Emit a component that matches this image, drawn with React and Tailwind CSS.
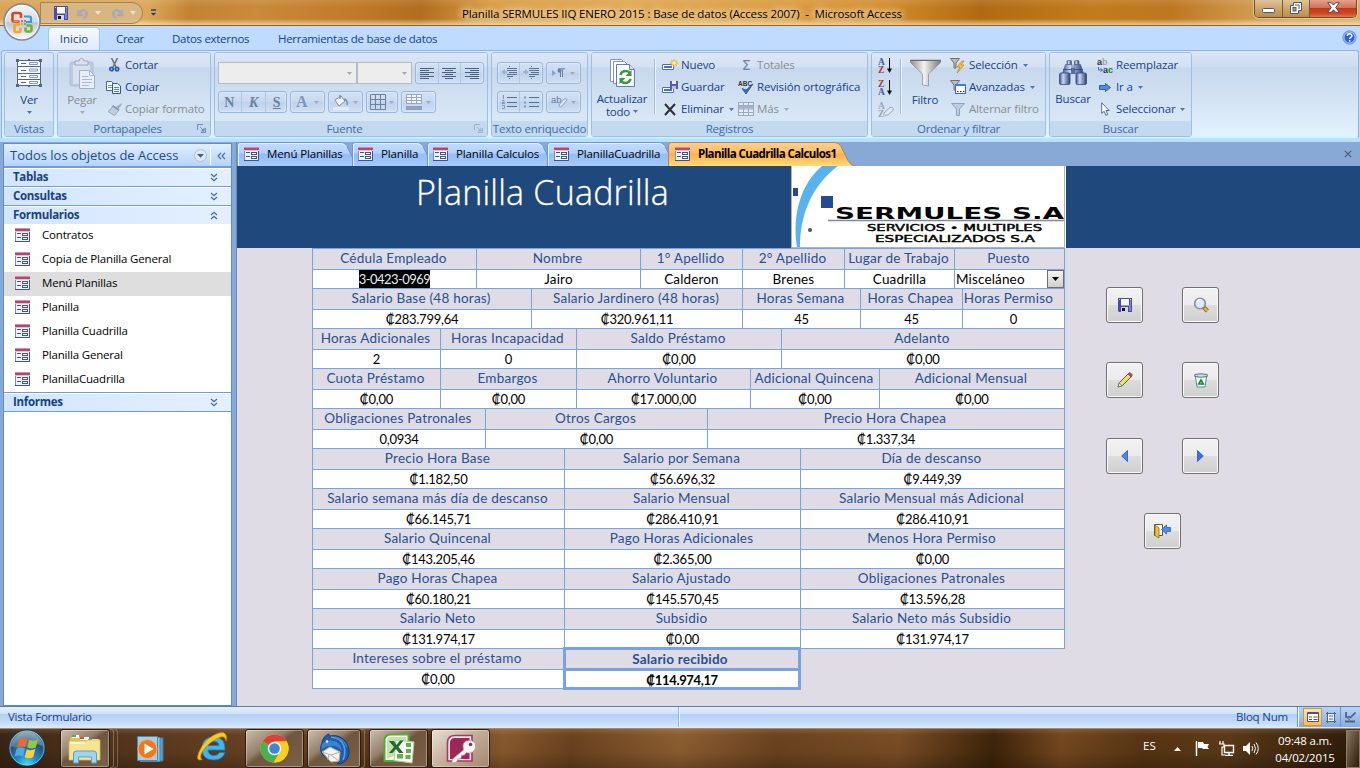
import React from "react";

/* ---------- small shared pieces ---------- */
const Svg = ({ w, h, vb, className = "", children }) => (
  <svg width={w} height={h} viewBox={vb || `0 0 ${w} ${h}`} className={`block shrink-0 ${className}`} fill="none">
    {children}
  </svg>
);

const Caret = ({ className = "text-[#4f74b0]" }) => (
  <Svg w={5} h={3} className={className}>
    <path d="M0 0h5L2.5 3z" fill="currentColor" />
  </Svg>
);

const FormIcon = () => (
  <Svg w={15} h={14}>
    <rect x=".5" y=".5" width="14" height="13" fill="#edf2fa" stroke="#7e8fae" />
    <path d="M14.500 3v10.500H0" stroke="#3f5480" />
    <path d="M0 0h15v3H0z" fill="#b5466e" />
    <path d="M0 .5h15" stroke="#d88aa6" />
    <path d="M0 3.500h15" stroke="#d9c6d3" />
    <path d="M2 5.500h4M2 9.500h4" stroke="#3f5480" />
    <rect x="7.500" y="5.500" width="5" height="2" fill="#fff" stroke="#3f5480" />
    <rect x="7.500" y="9.500" width="5" height="2" fill="#fff" stroke="#3f5480" />
  </Svg>
);

const Floppy = ({ s = 14 }) => (
  <Svg w={s} h={s} vb="0 0 14 14">
    <path d="M0 0h14v14H1L0 13z" fill="#4a49ad" />
    <path d="M12 1h1v12h-2V7h1z" fill="#7f80dc" />
    <path d="M3 1h8v6.500H3z" fill="#f4f8ff" />
    <path d="M3 9h7v5H3z" fill="#cfdcdf" />
    <path d="M4 10h3v3H4z" fill="#10131f" />
    <path d="M1 1h1v1H1zM12 1h1v1h-1z" fill="#c4c7f2" />
  </Svg>
);

/* ---------- title bar ---------- */
const OfficeOrb = () => (
  <Svg w={38} h={38}>
    <defs>
      <linearGradient id="orb" x1="0" y1="0" x2="0" y2="1">
        <stop offset="0" stopColor="#f7f8fa" />
        <stop offset=".5" stopColor="#d3d9e3" />
        <stop offset=".52" stopColor="#b9c4d6" />
        <stop offset="1" stopColor="#ffffff" />
      </linearGradient>
    </defs>
    <circle cx="19" cy="19" r="18" fill="url(#orb)" stroke="#7d8799" strokeWidth="1.500" />
    <circle cx="19" cy="19" r="16.500" stroke="#fff" strokeOpacity=".7" />
    <path d="M16.500 18.500H11q-1.500 0-1.500-1.500v-5q0-2 2-2H16q2 0 2 2v3" stroke="#d9461c" strokeWidth="2.600" />
    <path d="M10.500 18h5" stroke="#f08a2a" strokeWidth="2" />
    <path d="M22 14.500v-1h4.500q1.500 0 1.500 1.500v4h-5" stroke="#3f97d6" strokeWidth="2.200" />
    <path d="M17 21.500h-4q-1.500 0-1.500 1.500v4.500q0 1.500 1.500 1.500H16q1.500 0 1.500-1.500V25" stroke="#f6a61c" strokeWidth="2.600" />
    <path d="M22.500 24.500V27q0 1.500 1.500 1.500h3q1.500 0 1.500-1.500v-3q0-1.500-1.500-1.500h-3.500" stroke="#6fb52e" strokeWidth="2.600" />
    <path d="M18 17h2v2h-2z" fill="#e0682f" /><path d="M21 17h2v2h-2z" fill="#4aa0da" />
    <path d="M18 20h2v2h-2z" fill="#f6a61c" /><path d="M21 20h2v2h-2z" fill="#6fb52e" />
  </Svg>
);

const TitleBar = () => (
  <header className="relative flex h-[26px] border-b border-[#8a6432] bg-[linear-gradient(180deg,rgba(255,255,255,0.1)_0%,rgba(255,255,255,0)_30%,rgba(255,240,200,0)_75%,rgba(255,240,200,0.65)_100%),linear-gradient(100deg,#d8a458_0%,#dba75a_11%,#c38333_14%,#c98a39_19%,#c07a2b_26%,#b06e1e_31%,#d99a41_36%,#e0a650_46%,#da9a3e_58%,#d28c2d_65%,#b06b12_72%,#c27b1c_80%,#bd7720_86%,#d5a058_93%,#d8ae70_100%)]">
    <div className="ml-[40px] mt-[2px] flex h-[22px] w-[103px] items-center rounded-r-full border border-[#a4834f] bg-[#d9bd92]/70 pl-[13px]">
      <Floppy />
      <Svg w={13} h={13} className="ml-[8px]"><path d="M2 3v5h5M2 7.500Q7 1 10 4.500q2 3-2 7" stroke="#a9abb3" strokeWidth="2.500" /></Svg>
      <Svg w={6} h={5} className="ml-[6px]"><path d="M0 0h6L3 4z" fill="#e8e4de" /></Svg>
      <Svg w={13} h={13} className="ml-[10px]"><path d="M11 3v5H6M11 7.500Q6 1 3 4.500q-2 3 2 7" stroke="#a9abb3" strokeWidth="2.500" /></Svg>
      <Svg w={6} h={5} className="ml-[6px]"><path d="M0 0h6L3 4z" fill="#e8e4de" /></Svg>
    </div>
    <Svg w={7} h={8} className="ml-[7px] mt-[9px]"><path d="M1 1h5" stroke="#26375f" strokeWidth="1.400" /><path d="M0 3.500h7L3.500 7z" fill="#26375f" stroke="#f3e7cd" strokeWidth=".4" /></Svg>
    <h1 className="ml-[305px] mt-[5px] w-[444px] whitespace-nowrap text-[11.500px] leading-[17px] tracking-[-0.13px] text-black [text-shadow:0_0_6px_#fbe6c0,0_0_8px_#fbe6c0,0_0_10px_#fbe6c0]">
      Planilla SERMULES IIQ ENERO 2015 : Base de datos (Access 2007)&nbsp; -&nbsp; Microsoft Access
    </h1>
    <div className="ml-auto mr-[3px] flex h-[18px] overflow-hidden rounded-b-[5px] border border-t-0 border-[#6b4c25] shadow-[0_0_0_1px_rgba(255,235,200,0.5)]">
      <div className="flex w-[28px] items-end justify-center border-r border-[#7d5a2e] bg-gradient-to-b from-[#e0c59a] via-[#cda66c] to-[#bb8d4b] pb-[4px]">
        <Svg w={13} h={5}><rect x=".5" y=".5" width="12" height="4" rx="1" fill="#fff" stroke="#555463" /></Svg>
      </div>
      <div className="flex w-[27px] items-center justify-center border-r border-[#7d5a2e] bg-gradient-to-b from-[#e0c59a] via-[#cda66c] to-[#bb8d4b] pb-[2px]">
        <Svg w={12} h={12}><path d="M3.500.500h8v8h-3v3h-8v-8h3z" fill="#fff" stroke="#555463" /><rect x="3" y="5.500" width="3" height="3.500" fill="#c49c60" stroke="#555463" /><path d="M5 3h4v4" stroke="#555463" /></Svg>
      </div>
      <div className="flex w-[46px] items-center justify-center bg-[linear-gradient(180deg,#e3a28c_0%,#d4705a_45%,#c2371b_50%,#cf4a22_80%,#dd7a4c_100%)] pb-[2px]">
        <Svg w={13} h={11}><path d="M.700.700h3.500L6.500 3 8.800.700h3.500L8.700 5.500l3.600 4.800H8.800L6.500 8l-2.300 2.300H.700l3.600-4.800z" fill="#fff" stroke="#554650" /></Svg>
      </div>
    </div>
    <div className="absolute left-[3px] top-[3px] z-20"><OfficeOrb /></div>
  </header>
);

/* ---------- ribbon ---------- */
const RibbonTabs = () => (
  <nav className="flex h-[24px] items-end bg-[#bfdbff] text-[11.500px] tracking-[-0.3px] text-[#15428b]">
    <div className="ml-[48px] flex h-[23px] w-[52px] items-center justify-center rounded-t-[4px] border border-b-0 border-[#9fc4ee] bg-gradient-to-b from-[#f8fbff] to-[#dfeafa] tracking-[0px] shadow-[0_0_3px_#a6f3fb]">Inicio</div>
    <div className="ml-[16px] w-[40px] pb-[3px]">Crear</div>
    <div className="ml-[16px] w-[90px] whitespace-nowrap pb-[3px]">Datos externos</div>
    <div className="ml-[16px] whitespace-nowrap pb-[3px]">Herramientas de base de datos</div>
    <Svg w={15} h={15} className="mb-[5px] ml-auto mr-[3px]">
      <circle cx="7.500" cy="7.500" r="6.700" fill="#2a62d0" stroke="#7c9fdd" /><circle cx="7.500" cy="7.500" r="5.600" stroke="#dfeaff" strokeWidth=".9" />
      <path d="M5.300 6q0-2.300 2.300-2.300T9.900 5.700q0 1-1.200 1.700-1 .5-1 1.500M7.700 10v1.600" stroke="#fff" strokeWidth="1.500" />
    </Svg>
  </nav>
);

const Group = ({ width, label, launcher, children }) => (
  <section className={`${width} mr-[3px] flex h-[85px] shrink-0 flex-col overflow-hidden rounded-[3px] border border-[#9dbfe6] shadow-[inset_0_0_0_1px_rgba(255,255,255,0.35)]`}>
    <div className="flex h-[68px] bg-[linear-gradient(180deg,#dbe7f5_0%,#d4e1f3_20%,#c7d8ed_22%,#d9e8f6_100%)] pt-px">{children}</div>
    <div className="flex h-[15px] items-center bg-[#c2d9f0] text-[11.500px] tracking-[-0.2px] text-[#3e6aaa]">
      <span className="flex-1 whitespace-nowrap text-center">{label}</span>
      {launcher && (
        <Svg w={9} h={9} className={`mr-[4px] ${launcher}`}><path d="M.5 6V.500H6" stroke="currentColor" /><path d="M3 3l3 3M8.500 4v4.500H4" stroke="currentColor" /><path d="M7.500 3.500v4h-4z" fill="currentColor" /></Svg>
      )}
    </div>
  </section>
);

const Row = ({ icon, children, off, caret, gap = "gap-[3px]" }) => (
  <div className={`flex h-[22px] items-center whitespace-nowrap text-[11.500px] tracking-[-0.15px] ${gap} ${off ? "text-[#8d8d8d]" : "text-[#15428b]"}`}>
    <span className="flex w-[16px] shrink-0 justify-center">{icon}</span>
    <span>{children}</span>
    {caret && <Caret className={off ? "ml-[2px] text-[#a4a9b2]" : "ml-[2px] text-[#4f74b0]"} />}
  </div>
);

const Btn = ({ w, children }) => (
  <div className={`${w} flex h-[22px] items-center justify-around rounded-[3px] border border-[#9ab8de] bg-[linear-gradient(180deg,#d3e2f4_0%,#c7d9f0_48%,#bdd2ed_50%,#cfdff3_100%)] px-[2px] text-[#6b7f9f] shadow-[inset_0_0_0_1px_rgba(255,255,255,0.25)]`}>{children}</div>
);
const Sep = () => <i className="h-full w-px bg-[#afc7e4]" />;
const Off = () => <Caret className="text-[#a5a9b0]" />;

const Lines = ({ d }) => <Svg w={14} h={11}><path d={d} stroke="#4c5f80" /></Svg>;

const ViewIcon = () => (
  <Svg w={26} h={28}>
    <path d="M1.500 1.500h23v25h-23z" fill="#fbfcff" stroke="#4d6691" />
    <path d="M1.500 7.500h23M1.500 14.500h23M1.500 20.500h23" stroke="#4d6691" />
    <path d="M5 4.500h5M5 11.500h5M5 17.500h5M5 23.500h5" stroke="#4d6691" />
    <path d="M13.500 3.500h8v2h-8zM13.500 10h8v2h-8zM13.500 16.500h8v2h-8zM13.500 22.500h8v2h-8z" stroke="#8296b8" />
    <path d="M0 0h3v3H0zM23 0h3v3h-3zM0 25h3v3H0zM23 25h3v3h-3zM12 0h2v2h-2zM12 26h2v2h-2z" fill="#4d6691" />
  </Svg>
);
const PasteIcon = () => (
  <Svg w={27} h={31}>
    <rect x="1" y="4" width="23" height="24" rx="2" fill="#bccbe1" stroke="#abbcd6" />
    <rect x="4" y="7" width="17" height="19" fill="#d6e0ee" />
    <path d="M6 3h4q0-2.500 2.500-2.500T15 3h4v4H6z" fill="#dbe2ec" stroke="#98a8c2" />
    <path d="M10.500 12.500h10l5 5v13h-15z" fill="#e9eff8" stroke="#9eb0ce" />
    <path d="M20.500 12.500v5h5M13 18.500h6M13 21.500h10M13 24.500h10M13 27.500h7" stroke="#a9b9d4" />
  </Svg>
);
const Scissors = () => (
  <Svg w={11} h={14}><path d="M2.500 0l4.500 9M8.500 0L4 9" stroke="#6a7380" strokeWidth="1.600" /><circle cx="2.500" cy="11" r="1.700" stroke="#3157a8" strokeWidth="1.700" /><circle cx="8" cy="11" r="1.700" stroke="#3157a8" strokeWidth="1.700" /></Svg>
);
const CopyIcon = () => (
  <Svg w={16} h={13}><path d="M.5.500h5l2 2v7h-7z" fill="#fff" stroke="#4a68a8" /><path d="M2 4.500h4M2 6.500h4" stroke="#7b99d0" /><path d="M6.500 2.500h5L14.500 5v7.500h-8z" fill="#eaf2ff" stroke="#33569f" /><path d="M8 6.500h5M8 8.500h5M8 10.500h5" stroke="#5b82c8" /></Svg>
);
const Brush = () => (
  <Svg w={15} h={13}><path d="M15 0l-5.500 3.500 2.200 2.300L15 1z" fill="#a3abba" /><path d="M6 2.500L12 7l-4.500 5.500-6.500-4Q4.500 6.500 6 2.500z" fill="#c3cddd" stroke="#98a3b7" /><path d="M6 3l6 4" stroke="#8b95a9" strokeWidth="1.600" /></Svg>
);
const RefreshIcon = () => (
  <Svg w={27} h={29}>
    <path d="M1.500.500h11l4 4v18h-15z" fill="#fff" stroke="#8493b3" /><path d="M4.500 2.500h11l4 4v18h-15z" fill="#fff" stroke="#8493b3" />
    <path d="M7.500 5.500h13l5 5v17h-18z" fill="#fbfcff" stroke="#6a7ba1" /><path d="M20.500 5.500v5h5" fill="#d7e0f0" stroke="#6a7ba1" />
    <path d="M11.500 16q1-4 5.500-4 2.500 0 4 2" stroke="#3a9a3a" strokeWidth="2.600" /><path d="M22.500 11v6h-6z" fill="#3a9a3a" />
    <path d="M21.500 20q-1 4-5.500 4-2.500 0-4-2" stroke="#3a9a3a" strokeWidth="2.600" /><path d="M10.500 25v-6h6z" fill="#3a9a3a" />
  </Svg>
);
const NewRec = () => (
  <Svg w={16} h={13}><path d="M.5 5.500h11v5H.500z" fill="#fff" stroke="#5471a7" /><path d="M2 7h8v2H2z" fill="#3f74d2" /><path d="M12 0v8M8 4h8M9.200 1.200l5.600 5.600M14.800 1.200L9.200 6.800" stroke="#f1bb2d" strokeWidth="1.300" /><circle cx="12" cy="4" r="1.800" fill="#fff3a8" /></Svg>
);
const SaveRec = () => (
  <Svg w={16} h={13}><path d="M.5 6.500h11v5H.500z" fill="#fff" stroke="#5471a7" /><path d="M2 8h8v2H2z" fill="#3f74d2" /><path d="M8 0h8v8H8z" fill="#5a59b8" /><path d="M10 0h4v3h-4z" fill="#eef" /><path d="M10 5h4v3h-4z" fill="#b9c6d8" /></Svg>
);
const Abc = () => (
  <Svg w={17} h={15}><text x="0" y="5.500" fontSize="6.500" fontWeight="700" fontFamily="Liberation Sans" fill="#333" textLength="14">ABC</text><path d="M4 8.500l4 5.500 7-10-7 6z" fill="#3d6bd3" stroke="#2a50aa" strokeWidth=".8" /></Svg>
);
const MoreIcon = () => (
  <Svg w={16} h={14}><rect x=".5" y=".5" width="15" height="13" fill="#e6ecf6" stroke="#9aa9c2" /><path d="M0 3.500h16M0 7h16M0 10.500h16M5.500 0v14M10.500 0v14" stroke="#9aa9c2" /><path d="M1 4h14v2.500H1z" fill="#a3b3cc" /></Svg>
);
const SortIcon = ({ a, b, ca, cb }) => (
  <Svg w={16} h={17}>
    <text x="0" y="7.500" fontSize="9.500" fontWeight="700" fontFamily="Liberation Serif" fill={ca}>{a}</text>
    <text x="0" y="16" fontSize="9.500" fontWeight="700" fontFamily="Liberation Serif" fill={cb}>{b}</text>
    <path d="M11.500 1v12" stroke="#111" /><path d="M9 11.500h5L11.500 16z" fill="#111" />
  </Svg>
);
const ClearSort = () => (
  <Svg w={17} h={17}>
    <text x="0" y="7.500" fontSize="9.500" fontWeight="700" fontFamily="Liberation Serif" fill="#9aa7be">A</text>
    <text x="0" y="16" fontSize="9.500" fontWeight="700" fontFamily="Liberation Serif" fill="#9aa7be">Z</text>
    <path d="M6 12l6-5.500q4-1 3 3l-5 4.500q-5 1-4-2z" fill="#e3e8f0" stroke="#9aa7be" />
  </Svg>
);
const Funnel = () => (
  <Svg w={31} h={28}>
    <defs><linearGradient id="fun" x1="0" x2="1"><stop offset="0" stopColor="#8b8b8b" /><stop offset=".45" stopColor="#f3f3f3" /><stop offset="1" stopColor="#777" /></linearGradient></defs>
    <path d="M0 1h31v2L18.500 15v12l-6-1V15L0 3z" fill="url(#fun)" stroke="#8a8a8a" strokeWidth=".7" /><path d="M1 1.500h29" stroke="#6d6d6d" />
  </Svg>
);
const MiniFunnel = ({ c = "#707070", children }) => (
  <Svg w={16} h={15}><path d="M.5.500h9L6 5v5H4V5z" fill="#bdbdbd" stroke={c} />{children}</Svg>
);
const Binoculars = () => (
  <Svg w={28} h={26}>
    <defs><linearGradient id="bin" x1="0" x2="1"><stop offset="0" stopColor="#3c5385" /><stop offset=".35" stopColor="#c9d8f1" /><stop offset="1" stopColor="#28406f" /></linearGradient></defs>
    <rect x="8" y=".5" width="4.500" height="4.500" rx="1" fill="url(#bin)" stroke="#3c5385" strokeWidth=".6" />
    <rect x="15.500" y=".5" width="4.500" height="4.500" rx="1" fill="url(#bin)" stroke="#3c5385" strokeWidth=".6" />
    <path d="M6.500 4.500h6.500l.5 9H3.500zM15 4.500h6.500l3 9H14.500z" fill="url(#bin)" stroke="#3c5385" strokeWidth=".6" />
    <path d="M12 8h4v6h-4z" fill="#55709f" />
    <path d="M4 9.500h9M15 9.500h9" stroke="#2f4678" strokeWidth=".8" />
    <rect x=".5" y="13" width="10.500" height="11.500" rx="1.500" fill="url(#bin)" stroke="#2f4678" strokeWidth=".8" />
    <rect x="17" y="13" width="10.500" height="11.500" rx="1.500" fill="url(#bin)" stroke="#2f4678" strokeWidth=".8" />
  </Svg>
);

const BigLabel = ({ children, off }) => (
  <span className={`block whitespace-nowrap text-center text-[11.500px] leading-[13px] tracking-[-0.2px] ${off ? "text-[#8d8d8d]" : "text-[#15428b]"}`}>{children}</span>
);

const Ribbon = () => (
  <div className="flex h-[92px] bg-[#bfdbff] px-px pb-[3px]">
    <div className="flex flex-1 rounded-[3px] border border-[#8db2e3] border-b-[#a6f3fb] bg-[linear-gradient(180deg,#dbe6f4_0%,#cfddf0_17%,#c7d8ed_19%,#d7e6f5_65%,#e3f4ff_100%)] pl-[2px] pt-px shadow-[inset_0_-1px_2px_#c6f4ff]">
      <Group width="w-[50px]" label="Vistas">
        <div className="flex w-full flex-col items-center pt-[5px]">
          <ViewIcon /><div className="h-[6px]" /><BigLabel>Ver</BigLabel><div className="h-[5px]" /><Caret />
        </div>
      </Group>
      <Group width="w-[154px]" label="Portapapeles" launcher="text-[#6c8db9]">
        <div className="flex w-[48px] flex-col items-center pt-[4px]">
          <PasteIcon /><div className="h-[4px]" /><BigLabel off>Pegar</BigLabel><div className="h-[5px]" /><Off />
        </div>
        <div>
          <Row icon={<Scissors />}>Cortar</Row>
          <Row icon={<CopyIcon />}>Copiar</Row>
          <Row icon={<Brush />} off>Copiar formato</Row>
        </div>
      </Group>
      <Group width="w-[274px]" label="Fuente" launcher="text-[#9fb3cf]">
        <div className="flex flex-col gap-[7px] pl-[3px] pt-[8px]">
          <div className="flex">
            <div className="flex h-[22px] w-[139px] items-center justify-end border border-[#b3bbc5] bg-[#ededed] pr-[4px]"><Off /></div>
            <div className="mr-[3px] flex h-[22px] w-[55px] items-center justify-end border border-[#b3bbc5] bg-[#ededed] pr-[4px]"><Off /></div>
            <Btn w="w-[69px]">
              <Lines d="M0 .5h14M0 2.500h9M0 4.500h14M0 6.500h9M0 8.500h14M0 10.500h9" /><Sep />
              <Lines d="M0 .5h14M3 2.500h8M0 4.500h14M3 6.500h8M0 8.500h14M3 10.500h8" /><Sep />
              <Lines d="M0 .5h14M5 2.500h9M0 4.500h14M5 6.500h9M0 8.500h14M5 10.500h9" />
            </Btn>
          </div>
          <div className="flex gap-[3px]">
            <Btn w="w-[69px]">
              <b className="font-['Liberation_Serif',serif] text-[14px]">N</b><Sep />
              <b className="font-['Liberation_Serif',serif] text-[14px] italic">K</b><Sep />
              <b className="font-['Liberation_Serif',serif] text-[14px] underline">S</b>
            </Btn>
            <Btn w="w-[35px]"><b className="font-['Liberation_Serif',serif] text-[16px] text-[#8095b5]">A</b><Off /></Btn>
            <Btn w="w-[35px]"><Svg w={16} h={16}><path d="M2 6l6-4 4 5-6 5z" fill="#f3f5f9" stroke="#7f8fa9" /><path d="M7 5V1M11 5q4 1 3 6" stroke="#7f8fa9" strokeWidth="1.500" /><path d="M0 13h16v3H0z" fill="#e4ebf5" /></Svg><Off /></Btn>
            <Btn w="w-[32px]"><Svg w={16} h={16}><path d="M.5.500h15v15H.500zM.5 5.500h15M.5 10.500h15M5.500.500v15M10.500.500v15" stroke="#6e7f9b" /></Svg><Off /></Btn>
            <Btn w="w-[35px]"><Svg w={16} h={16}><path d="M.5.500h15v9H.500zM.5 3.500h15M.5 6.500h15M5.500.500v9M10.500.500v9" fill="#f3f6fa" stroke="#98a6bd" /><path d="M0 12h16v4H0z" fill="#8fa0bd" /></Svg><Off /></Btn>
          </div>
        </div>
      </Group>
      <Group width="w-[97px]" label="Texto enriquecido">
        <div className="flex flex-col gap-[7px] pl-[5px] pt-[8px]">
          <div className="flex gap-[3px]">
            <Btn w="w-[46px]">
              <Svg w={16} h={14}><path d="M6 2.500h10M6 4.500h10M9 6.500h7M6 8.500h10M6 10.500h6" stroke="#5d6f8e" /><path d="M0 6l4-3v2h2v2H4v2z" fill="#a1b2cc" /><path d="M8.500 0v14" stroke="#5d6f8e" strokeDasharray="1 1" /></Svg><Sep />
              <Svg w={16} h={14}><path d="M6 2.500h10M6 4.500h10M9 6.500h7M6 8.500h10M6 10.500h6" stroke="#5d6f8e" /><path d="M6 6L2 3v2H0v2h2v2z" fill="#a1b2cc" /><path d="M8.500 0v14" stroke="#5d6f8e" strokeDasharray="1 1" /></Svg>
            </Btn>
            <Btn w="w-[35px]"><Svg w={13} h={10}><path d="M0 2v6l4-3z" fill="#8fa2c0" /><path d="M8.500 1v8M10.500 1v8M6 .8h7" stroke="#6b7f9f" /><circle cx="7.500" cy="2.800" r="2" fill="#6b7f9f" /></Svg><Off /></Btn>
          </div>
          <div className="flex gap-[3px]">
            <Btn w="w-[46px]">
              <Svg w={16} h={14}><path d="M6 2.500h10M6 7.500h10M6 11.500h10" stroke="#5d6f8e" /><path d="M2.500 0v4M1 5.500h2v2H1v1h3M1 10.500h2.500v3H1" stroke="#8698b5" /></Svg><Sep />
              <Svg w={16} h={14}><path d="M6 2.500h10M6 7.500h10M6 11.500h10" stroke="#5d6f8e" /><path d="M1 1.500h2v2H1zM1 6.500h2v2H1zM1 10.500h2v2H1z" fill="#8698b5" /></Svg>
            </Btn>
            <Btn w="w-[35px]"><Svg w={17} h={18}><text x="0" y="10" fontSize="9.500" fontFamily="Liberation Sans" fill="#6b7f9f">ab</text><path d="M8 12l5-6q3-1 3 1l-5 6q-3 2-3-1z" fill="#e3e9f2" stroke="#8fa0bd" /></Svg><Off /></Btn>
          </div>
        </div>
      </Group>
      <Group width="w-[277px]" label="Registros">
        <div className="flex w-[60px] flex-col items-center pt-[5px]">
          <RefreshIcon /><div className="h-[4px]" /><BigLabel>Actualizar</BigLabel>
          <div className="flex items-center gap-[3px]"><BigLabel>todo</BigLabel><Caret /></div>
        </div>
        <i className="mr-[7px] mt-[5px] ml-[2px] h-[55px] w-px bg-[#9dbbe0] shadow-[1px_0_0_#eef5fd]" />
        <div className="w-[76px]">
          <Row icon={<NewRec />}>Nuevo</Row>
          <Row icon={<SaveRec />}>Guardar</Row>
          <Row icon={<Svg w={12} h={13}><path d="M1 1l10 11M11 1L1 12" stroke="#2d2d33" strokeWidth="2" /></Svg>} caret>Eliminar</Row>
        </div>
        <div>
          <Row icon={<span className="font-['DejaVu_Sans',sans-serif] text-[14px] leading-none text-[#6c82a8]">Σ</span>} off>Totales</Row>
          <Row icon={<Abc />}>Revisión ortográfica</Row>
          <Row icon={<MoreIcon />} off caret>Más</Row>
        </div>
      </Group>
      <Group width="w-[175px]" label="Ordenar y filtrar">
        <div className="flex w-[28px] flex-col pl-[6px]">
          <div className="flex h-[22px] items-center"><SortIcon a="A" b="Z" ca="#3a5da8" cb="#a03a42" /></div>
          <div className="flex h-[22px] items-center"><SortIcon a="Z" b="A" ca="#a03a42" cb="#3a5da8" /></div>
          <div className="flex h-[22px] items-center"><ClearSort /></div>
        </div>
        <i className="mt-[5px] h-[55px] w-px bg-[#9dbbe0] shadow-[1px_0_0_#eef5fd]" />
        <div className="flex w-[48px] flex-col items-center pt-[5px]"><Funnel /><div className="h-[6px]" /><BigLabel>Filtro</BigLabel></div>
        <div className="pl-px">
          <Row icon={<MiniFunnel><path d="M12 3L7 9h3l-3 6 7-8h-3l3-4z" fill="#f9c832" stroke="#b4811b" strokeWidth=".7" /></MiniFunnel>} caret>Selección</Row>
          <Row icon={<MiniFunnel><rect x="5.500" y="4.500" width="10" height="9" fill="#fff" stroke="#3869bd" /><path d="M5 4h11v2H5z" fill="#3d7fe0" /><path d="M7 11.500h1.500M10 11.500h1.500M13 11.500h1.500" stroke="#222" /></MiniFunnel>} caret>Avanzadas</Row>
          <Row icon={<Svg w={14} h={13}><path d="M.5.500h13L8.500 6v6.500H5.500V6z" fill="#bccbe1" stroke="#8fa2c0" /></Svg>} off>Alternar filtro</Row>
        </div>
      </Group>
      <Group width="w-[143px]" label="Buscar">
        <div className="flex w-[46px] flex-col items-center pt-[6px]"><Binoculars /><div className="h-[6px]" /><BigLabel>Buscar</BigLabel></div>
        <div className="pl-px">
          <Row icon={<Svg w={16} h={15}><g fontFamily="Liberation Sans" fontWeight="700" fontSize="9"><text x="0" y="7" fill="#333">a</text><text x="5" y="7" fill="#a3a3a3">b</text><text x="6" y="14.500" fill="#333">a</text><text x="11" y="14.500" fill="#19842a">c</text></g><path d="M1.500 9v3h4M3.500 10.500l2 1.500-2 1.500" stroke="#3f6fc0" /></Svg>}>Reemplazar</Row>
          <Row icon={<Svg w={12} h={9}><path d="M.5 2.500h6v-2L11.500 4.500l-5 4v-2h-6z" fill="#4d8bf0" stroke="#2b5cb8" /></Svg>} caret>Ir a</Row>
          <Row icon={<Svg w={9} h={14}><path d="M.7.800v10.500l2.500-2 1.600 4 1.900-.8-1.700-4h3.200z" fill="#fff" stroke="#4c5e84" strokeWidth=".9" /></Svg>} caret>Seleccionar</Row>
        </div>
      </Group>
    </div>
  </div>
);

/* ---------- navigation pane ---------- */
const Chevrons = ({ up }) => (
  <Svg w={8} h={9} className={up ? "rotate-180" : ""}><path d="M1 1l3 2.800L7 1M1 5l3 2.800L7 5" stroke="#3f6aab" strokeWidth="1.200" /></Svg>
);
const NavHead = ({ children, up }) => (
  <div className="flex h-[19px] items-center justify-between border-b border-[#6f9dd9] bg-gradient-to-r from-[#d3e5ff] to-[#e4f0ff] pl-[9px] pr-[13px] text-[11.500px] font-bold tracking-[-0.3px] text-[#15428b] shadow-[inset_0_1px_0_#fff]">
    {children}<Chevrons up={up} />
  </div>
);
const FORMS = ["Contratos", "Copia de Planilla General", "Menú Planillas", "Planilla", "Planilla Cuadrilla", "Planilla General", "PlanillaCuadrilla"];

const NavPane = () => (
  <aside className="ml-[3px] mt-px flex w-[229px] shrink-0 flex-col border border-[#5f8dcc] bg-white">
    <div className="flex h-[22px] shrink-0 items-center bg-gradient-to-b from-[#e2eeff] to-[#b5d3fb] pl-[6px] pt-px text-[13px] text-[#204d89]">
      <span className="w-[184px] whitespace-nowrap">Todos los objetos de Access</span>
      <Svg w={13} h={13}><circle cx="6.500" cy="6.500" r="6" fill="#dfe7f3" stroke="#b4bfd2" /><path d="M3 5h7L6.500 8.800z" fill="#3e5e96" /></Svg>
      <i className="mx-[3px] h-[18px] w-px bg-white" />
      <Svg w={9} h={8} className="ml-[3px]"><path d="M4 .8L1 4l3 3.200M8 .8L5 4l3 3.200" stroke="#3f6aab" strokeWidth="1.200" /></Svg>
    </div>
    <div className="border-t-2 border-[#6f9dd9]">
      <NavHead>Tablas</NavHead>
      <NavHead>Consultas</NavHead>
      <NavHead up>Formularios</NavHead>
      <ul className="-mt-px h-[168px] text-[11.500px] tracking-[-0.18px] text-black">
        {FORMS.map((f, i) => (
          <li key={f} className={`flex h-[24px] items-center gap-[12px] pb-[2px] pl-[11px] ${i === 2 ? "bg-[#dedede]" : "bg-white"}`}>
            <FormIcon />{f}
          </li>
        ))}
      </ul>
      <div className="border-t border-[#6f9dd9]"><NavHead>Informes</NavHead></div>
    </div>
  </aside>
);

/* ---------- document tabs ---------- */
const DocTab = ({ width, w, pad, active, children }) => (
  <div className={`relative h-[24px] shrink-0 ${width}`}>
    <svg className="absolute left-0 top-0" width={w} height="24" fill="none">
      <defs>
        <linearGradient id={active ? "tabOn" : "tabOff"} x1="0" y1="0" x2="0" y2="1">
          <stop offset="0" stopColor={active ? "#ffcf92" : "#c3dcfd"} />
          <stop offset=".45" stopColor={active ? "#ffbd65" : "#b2d1fb"} />
          <stop offset=".5" stopColor={active ? "#ffae44" : "#93befa"} />
          <stop offset="1" stopColor={active ? "#ffdb7d" : "#a5c9fb"} />
        </linearGradient>
      </defs>
      <path d={`M.5 24V3.500q0-3 3-3H${w - 20}q4 0 6 4l7 14q3 5.500 7 5.500`} fill={active ? "url(#tabOn)" : "url(#tabOff)"} stroke={active ? "#a8875e" : "#6a96d3"} />
      {!active && <path d={`M1.500 24V3.500q0-2 2-2H${w - 20}q3.500 0 5.500 3.500`} stroke="#e5f1ff" />}
    </svg>
    <div className={`relative flex h-full items-center gap-[8px] whitespace-nowrap text-[11.500px] tracking-[-0.15px] text-black ${pad}`}>
      <FormIcon /><span className={active ? "font-bold tracking-[-0.58px]" : ""}>{children}</span>
    </div>
  </div>
);

const DocTabs = () => (
  <div className="flex h-[24px] bg-[#88a9d6]">
    <DocTab width="w-[115px]" w={124} pad="pl-[7px]">Menú Planillas</DocTab>
    <DocTab width="w-[75px]" w={85} pad="pl-[6px]">Planilla</DocTab>
    <DocTab width="w-[120px]" w={130} pad="pl-[6px]">Planilla Calculos</DocTab>
    <DocTab width="w-[121px]" w={132} pad="pl-[7px]">PlanillaCuadrilla</DocTab>
    <DocTab width="w-[186px]" w={187} pad="pl-[7px]" active>Planilla Cuadrilla Calculos1</DocTab>
    <Svg w={8} h={8} className="ml-auto mr-[8px] mt-[8px]"><path d="M.8.800l6.400 6.400M7.200.800L.8 7.200" stroke="#4e5a70" strokeWidth="1.200" /></Svg>
  </div>
);

/* ---------- form ---------- */
const Logo = () => (
  <svg width="274" height="82" viewBox="0 0 274 82" className="block shrink-0 bg-white" fill="none">
    <path d="M0 81.500h273.500V0" stroke="#b2b2b2" />
    <path d="M.5 0v82" stroke="#b2b2b2" />
    <path d="M31 0C10 18 1 48 6 81h3C9 50 20 20 47 0z" fill="#58b2ee" />
    <path d="M2 22h5v8H2zM30 30h12v12H30z" fill="#244a96" />
    <circle cx="19" cy="64" r="2" fill="#4a5568" />
    <path d="M37 54.500h236" stroke="#7c8ba1" strokeWidth="1.500" />
    <g fontFamily="DejaVu Sans" fill="#050505">
      <text x="44" y="53" fontSize="16" fontWeight="700" textLength="229" lengthAdjust="spacingAndGlyphs">SERMULES S.A</text>
      <text x="76" y="65" fontSize="9" textLength="175" stroke="#050505" strokeWidth=".45" lengthAdjust="spacingAndGlyphs">SERVICIOS • MULTIPLES</text>
      <text x="84" y="76" fontSize="9" textLength="160" stroke="#050505" strokeWidth=".45" lengthAdjust="spacingAndGlyphs">ESPECIALIZADOS S.A</text>
    </g>
  </svg>
);

const THREE = ["w-[252px]", "w-[236px]", "w-[264px]"];
const ROWS = [
  { w: ["w-[164px]", "w-[164px]", "w-[102px]", "w-[102px]", "w-[110px]", "w-[110px]"], l: ["Cédula Empleado", "Nombre", "1° Apellido", "2° Apellido", "Lugar de Trabajo", "Puesto"], v: ["3-0423-0969", "Jairo", "Calderon", "Brenes", "Cuadrilla", "Misceláneo"] },
  { w: ["w-[219px]", "w-[211px]", "w-[118px]", "w-[102px]", "w-[102px]"], l: ["Salario Base (48 horas)", "Salario Jardinero (48 horas)", "Horas Semana", "Horas Chapea", "Horas Permiso"], v: ["₡283.799,64", "₡320.961,11", "45", "45", "0"] },
  { w: ["w-[128px]", "w-[136px]", "w-[205px]", "w-[283px]"], l: ["Horas Adicionales", "Horas Incapacidad", "Saldo Préstamo", "Adelanto"], v: ["2", "0", "₡0,00", "₡0,00"] },
  { w: ["w-[128px]", "w-[136px]", "w-[174px]", "w-[129px]", "w-[185px]"], l: ["Cuota Préstamo", "Embargos", "Ahorro Voluntario", "Adicional Quincena", "Adicional Mensual"], v: ["₡0,00", "₡0,00", "₡17.000,00", "₡0,00", "₡0,00"] },
  { w: ["w-[173px]", "w-[222px]", "w-[357px]"], l: ["Obligaciones Patronales", "Otros Cargos", "Precio Hora Chapea"], v: ["0,0934", "₡0,00", "₡1.337,34"] },
  { w: THREE, l: ["Precio Hora Base", "Salario por Semana", "Día de descanso"], v: ["₡1.182,50", "₡56.696,32", "₡9.449,39"] },
  { w: THREE, l: ["Salario semana más día de descanso", "Salario Mensual", "Salario Mensual más Adicional"], v: ["₡66.145,71", "₡286.410,91", "₡286.410,91"] },
  { w: THREE, l: ["Salario Quincenal", "Pago Horas Adicionales", "Menos Hora Permiso"], v: ["₡143.205,46", "₡2.365,00", "₡0,00"] },
  { w: THREE, l: ["Pago Horas Chapea", "Salario Ajustado", "Obligaciones Patronales"], v: ["₡60.180,21", "₡145.570,45", "₡13.596,28"] },
  { w: THREE, l: ["Salario Neto", "Subsidio", "Salario Neto más Subsidio"], v: ["₡131.974,17", "₡0,00", "₡131.974,17"] },
];
const cellBase = "flex shrink-0 items-center justify-center whitespace-nowrap border-l border-t border-[#78a3dc]";
const money = "text-[13px] tracking-[-0.25px] pt-[2px]";
const word = "text-[13.500px] tracking-[0.15px]";

const Value = ({ text, width }) => {
  if (text === "3-0423-0969")
    return (
      <div className={`${cellBase} ${width} text-[13px] tracking-[-0.55px]`}>
        <span className="flex h-[18px] items-center bg-black pt-[2px] text-[#e9edf5]">{text}</span>
      </div>
    );
  if (text === "Misceláneo")
    return (
      <div className={`${cellBase} ${width} ${word} pl-px`}>
        <span className="flex-1">{text}</span>
        <span className="flex h-[18px] w-[17px] items-center justify-center border border-[#6e6e6e] bg-gradient-to-b from-[#f4f4f4] to-[#cfcfcf]"><Svg w={7} h={4}><path d="M0 0h7L3.500 4z" fill="#000" /></Svg></span>
      </div>
    );
  return <div className={`${cellBase} ${width} ${/\d/.test(text) ? money : word}`}>{text}</div>;
};

const labelText = "text-[13.500px] tracking-[0.24px] text-[#265094]";

const Table = () => (
  <div className="ml-[75px] w-[753px]">
    {ROWS.map((r, i) => (
      <div key={i} className="w-[753px] border-r border-[#78a3dc]">
        <div className={`flex h-[21px] ${labelText}`}>
          {r.l.map((t, j) => <div key={j} className={`${cellBase} ${r.w[j]} pb-[2px] ${t === "Horas Permiso" ? "pr-[10px]" : "pr-[2px]"}`}>{t}</div>)}
        </div>
        <div className="flex h-[19px] bg-white text-black">
          {r.v.map((t, j) => <Value key={j} text={t} width={r.w[j]} />)}
        </div>
      </div>
    ))}
    <div className="flex items-start border-t border-[#78a3dc]">
      <div className="w-[251px] border-b border-l border-[#78a3dc]">
        <div className={`flex h-[20px] items-center justify-center pb-[2px] pr-[2px] ${labelText}`}>Intereses sobre el préstamo</div>
        <div className={`flex h-[19px] items-center justify-center border-t border-[#78a3dc] bg-white ${money}`}>₡0,00</div>
      </div>
      <div className="-mt-[2px] w-[238px] border-[3px] border-[#78a3dc] font-bold">
        <div className="flex h-[18px] items-center justify-center pr-[4px] text-[13.500px] tracking-[0.2px] text-[#265094]">Salario recibido</div>
        <div className="flex h-[19px] items-center justify-center border-t-[3px] border-[#78a3dc] bg-white pt-[4px] text-[13px] tracking-[-0.35px]">₡114.974,17</div>
      </div>
    </div>
  </div>
);

const Cmd = ({ children }) => (
  <button className="flex h-[36px] w-[37px] items-center justify-center rounded-[3px] border border-[#707070] bg-[linear-gradient(180deg,#f2f2f2_0%,#ebebeb_50%,#dddddd_51%,#cfcfcf_100%)] shadow-[inset_0_0_0_1px_#fbfbfb]">{children}</button>
);
const Commands = () => (
  <div className="ml-[41px] mt-[39px] flex w-[113px] flex-col gap-y-[39.400px]">
    <div className="flex justify-between">
      <Cmd><Floppy /></Cmd>
      <Cmd><Svg w={16} h={16}><circle cx="7" cy="6.500" r="5.300" fill="#dcebfa" stroke="#8b8b90" strokeWidth="1.600" /><path d="M4 5q1-2.500 3.500-2.500" stroke="#fff" strokeWidth="1.500" /><path d="M11 10.500l3.500 3.500" stroke="#8a6a24" strokeWidth="4" /><path d="M11.500 11l3 3" stroke="#e9b84e" strokeWidth="2.200" /></Svg></Cmd>
    </div>
    <div className="flex justify-between">
      <Cmd><Svg w={16} h={16}><path d="M1 15l1.500-4.500L11.500 1.500l3 3L5.500 13.500z" fill="#efdf6c" stroke="#54502a" strokeWidth=".9" /><path d="M11 2l2-1.500 2.500 2.500L14 5z" fill="#b74848" stroke="#7d3432" strokeWidth=".6" /><path d="M1 15l1.200-4L5 13.800z" fill="#f5f3ea" stroke="#555" strokeWidth=".6" /></Svg></Cmd>
      <Cmd><Svg w={14} h={15}><path d="M1.300 3l1.700 11h8l1.700-11z" fill="#eef7fb" stroke="#6b8799" /><path d="M.8 1.500q6.200-1.500 12.400 0v2q-6.200 1.500-12.400 0z" fill="#cfdde6" stroke="#4f6271" strokeWidth=".9" /><path d="M7 7L4.700 11h4.600z" stroke="#128a28" strokeWidth="1.600" /></Svg></Cmd>
    </div>
    <div className="flex justify-between">
      <Cmd><Svg w={7} h={12}><path d="M6.500.500v11L.7 6z" fill="#4c83ec" stroke="#2455ba" strokeWidth=".8" /></Svg></Cmd>
      <Cmd><Svg w={7} h={12}><path d="M.5.500v11L6.300 6z" fill="#3b72e0" stroke="#2455ba" strokeWidth=".8" /></Svg></Cmd>
    </div>
    <div className="flex justify-center">
      <Cmd><Svg w={17} h={15}><path d="M.5.500h8v11h-8z" fill="#fff" stroke="#6b5524" /><path d="M1 1l4 3v10l-4-2.500z" fill="#f4bf45" stroke="#8a6519" strokeWidth=".8" /><path d="M16.500 3.500h-4V1L7.500 5.500l5 4.500V7.500h4z" fill="#4c8bf0" stroke="#2a5cb9" strokeWidth=".8" /></Svg></Cmd>
    </div>
  </div>
);

const FormView = () => (
  <div className="flex-1 bg-[#dfdce6]">
    <div className="flex h-[82px] bg-[#1f497d]">
      <h2 className="w-[554px] whitespace-nowrap pl-[179px] pt-[2px] font-['Open_Sans','Noto_Sans',sans-serif] text-[34px] font-light leading-[48px] tracking-[0.2px] text-white [-webkit-text-stroke:0.3px_white]">Planilla Cuadrilla</h2>
      <Logo />
      <i className="w-px bg-white" />
    </div>
    <div className="flex font-['Lato',sans-serif]"><Table /><Commands /></div>
  </div>
);

/* ---------- status bar ---------- */
const StatusBar = () => (
  <footer className="flex h-[22px] items-center border-t border-[#567db0] bg-[linear-gradient(180deg,#e3efff_0%,#cfe1fa_32%,#b3cff5_36%,#c6dcf8_75%,#dcebff_100%)] pb-px pl-[8px] text-[11.500px] tracking-[-0.25px] text-[#15428b]">
    <span className="w-[670px]">Vista Formulario</span>
    <i className="h-full w-px bg-[#96b7e2] shadow-[1px_0_0_#f1f7ff]" />
    <span className="ml-auto mr-[9px] tracking-[-0.2px]">Bloq Num</span>
    <div className="flex h-full w-[63px] items-center border-l border-[#6e94c9] bg-gradient-to-b from-[#b9d3f6] to-[#86addf] pl-[5px] shadow-[inset_1px_0_0_#fff]">
      <span className="flex h-[18px] w-[19px] items-center justify-center border border-[#c49a4b] bg-gradient-to-b from-[#ffe3ae] to-[#ffb94d]"><Svg w={12} h={10}><path d="M.5.500h11v9H.500z" fill="#fff" stroke="#4d5566" /><path d="M0 1.500h12M2 5h3M2 7.500h3M6.500 5h4M6.500 7.500h4" stroke="#4d5566" /></Svg></span>
      <span className="flex h-full w-[18px] items-center justify-center"><Svg w={10} h={11}><path d="M1.500 0v11M8.500 0v11M0 1.500h10M0 9.500h10" stroke="#53627c" /><path d="M2 2h6v7H2z" fill="#eef4fc" /><path d="M3 4h4M3 7h4" stroke="#53627c" /></Svg></span>
      <i className="h-full w-px bg-[#6e94c9]" />
      <span className="flex h-full flex-1 items-center justify-center"><Svg w={11} h={11}><path d="M1 0v5h4.500M5 6L10.500.500" stroke="#53627c" strokeWidth="1.700" /><path d="M0 9.500h10" stroke="#53627c" strokeWidth="2" /><path d="M1 5l4 3" stroke="#53627c" /></Svg></span>
    </div>
  </footer>
);

/* ---------- taskbar ---------- */
const TaskBtn = ({ w, children, bright }) => (
  <div className={`${w} flex h-[39px] shrink-0 items-center justify-center rounded-[3px] border border-[#2b1b0c] shadow-[inset_0_0_0_1px_rgba(255,255,255,0.35)] ${bright ? "bg-[linear-gradient(140deg,#e9dfd6_0%,#c2ad98_50%,#a5886d_100%)]" : "bg-[linear-gradient(145deg,#cbbdae_0%,#94806b_38%,#6f563f_48%,#7d6046_100%)]"}`}>{children}</div>
);

const StartOrb = () => (
  <Svg w={38} h={38}>
    <defs>
      <radialGradient id="start" cx=".5" cy=".95" r=".95"><stop offset="0" stopColor="#3fe0fb" /><stop offset=".3" stopColor="#2089c4" /><stop offset=".65" stopColor="#21527f" /><stop offset="1" stopColor="#88a7b9" /></radialGradient>
    </defs>
    <circle cx="19" cy="19" r="18" fill="url(#start)" stroke="#16384f" /><circle cx="19" cy="19" r="17" stroke="#a7c5d4" strokeOpacity=".7" />
    <path d="M3 17Q8 3 19 3t16 14q-8-4-16 0T3 17z" fill="#fff" fillOpacity=".22" />
    <path d="M11 10.500q4-2.500 8.500-.5L17.500 18q-4.500-1.800-8.500.3z" fill="#ee6a2c" />
    <path d="M21 10.800q4 2.200 9-.3L27.800 18.500q-4 2-8.500 0z" fill="#93c93c" />
    <path d="M8.500 19.800q4-2.300 8.500-.3L15 27.500q-4-2-8.500.3z" fill="#53a8e2" />
    <path d="M18.700 20.300q4.300 2 8.700-.2L25.200 28q-4 2.300-8.500.3z" fill="#fdcf3d" />
  </Svg>
);
const Folder = () => (
  <Svg w={34} h={30}>
    <path d="M2 3h10l2 2h17v20H2z" fill="#e3bf5e" /><path d="M4 1h7v3H4z" fill="#f7f4e8" /><path d="M4 1h4v2H4z" fill="#42b549" /><path d="M12 3h9v3h-9z" fill="#f7f4e8" /><path d="M12 3h4v2h-4z" fill="#d5542e" /><path d="M20 5h10v3H20z" fill="#f7f4e8" /><path d="M20 5h4v2h-4z" fill="#3b9ed9" />
    <path d="M1 7h17l2-1h12v20H1z" fill="#f7e394" stroke="#d9b95a" strokeWidth=".8" /><path d="M2 8h15v2H2z" fill="#fff6cc" />
    <path d="M5.500 29V20q0-3 3-3h17q3 0 3 3v9h-5v-6H10.500v6z" fill="#9fd3ee" stroke="#5c9fc6" />
  </Svg>
);
const Wmp = () => (
  <Svg w={27} h={26}>
    <path d="M7 2h19v23H7z" fill="#5d9fca" stroke="#3b7aa6" /><path d="M3 1.500h20v24H3z" fill="#8fc3e3" stroke="#4a8ab3" /><path d="M.5.500h20v24H.500z" fill="#a4cfe8" stroke="#4a8ab3" />
    <circle cx="10.500" cy="13" r="9.500" fill="#ef7a1b" stroke="#fbb26a" /><path d="M7.500 7.500v11l9-5.500z" fill="#fff" />
  </Svg>
);
const IE = () => (
  <Svg w={32} h={32}>
    <path d="M28 19H11q.5 5.500 6 5.500 4 0 5.500-3H28q-2.500 7.500-11 7.500Q5 29 5 17.500T17 6q11.500 0 11 13zM11 14.500h11q-.6-4-5.300-4T11 14.500z" fill="#43b5ee" stroke="#1a7bc0" strokeWidth=".8" />
    <path d="M5 28.500Q-2 31 2 21 7 9 18 3.500q11-5 11.500 3 0 2-.5 3.500Q28 3 20 7.500 9 13.500 4.500 22q-2 5 .5 6.500z" fill="#fbc81f" stroke="#c28f0e" strokeWidth=".7" />
  </Svg>
);
const Chrome = () => (
  <Svg w={29} h={29}>
    <circle cx="14.500" cy="14.500" r="14" fill="#fccf1d" />
    <path d="M14.500 14.500L2.500 7.300A14 14 0 0 1 26.700 7.500H14.500z" fill="#dd4036" />
    <path d="M14.500 14.500L2.400 7.300A14 14 0 0 0 13.500 28.500L20 17.500z" fill="#4caf50" />
    <path d="M20.500 17.500L14 28.500A14 14 0 0 0 26.700 7.500H14.500z" fill="#fccf1d" />
    <circle cx="14.500" cy="14.500" r="6.800" fill="#f4f4f4" /><circle cx="14.500" cy="14.500" r="5.300" fill="#3f86d6" />
  </Svg>
);
const Thunderbird = () => (
  <Svg w={32} h={32}>
    <path d="M11 1q-1 2 1 2 10-2 16 6 5 9 2 15-3 7-11 7 3-2 3-5L7 24Q0 18 4 10q1-7 7-9z" fill="#225da8" stroke="#123a75" />
    <path d="M13 4q10 1 13 9 2 7-1 14" stroke="#56a1e3" strokeWidth="1.500" /><path d="M17 4q10 3 12 10" stroke="#3b83cf" strokeWidth="1.500" />
    <path d="M4 11Q10 5 19 9q4 3 5 9-5-6-12-5-5 0-9 4z" fill="#3b83cf" />
    <path d="M4 19l8-5 10 5-1 9-8 1z" fill="#f5f3ee" stroke="#b7b0a5" /><path d="M4 19l9 3 9-3M13 22l8 6M11 21l-1 6" stroke="#b7b0a5" />
    <circle cx="9" cy="8.500" r="1.200" fill="#fff" />
  </Svg>
);
const Excel = () => (
  <Svg w={32} h={31}>
    <path d="M1.500 28V7Q2 1.500 8 1.500h17.500V16L16 28z" fill="#f6fbf2" stroke="#56ac35" strokeWidth="2" /><path d="M4 26V8q0-4 4-4h15v14z" fill="#c3e3ad" />
    <path d="M13 7l18 2-2 21-18-2.500z" fill="#fbfdf9" stroke="#a8cf93" />
    <path d="M23 10h5v4h-5zM23 16h5v4h-5zM22.500 22h5v4h-5zM14 21h6v4.500h-6z" fill="#69ad48" />
    <path d="M6 8h5l2.500 4L17 7.500h3.500L15.500 14l5 6H16l-3-4-3.500 4H6l5-6z" fill="#1f6b2e" />
  </Svg>
);
const AccessIcon = () => (
  <Svg w={30} h={30}>
    <path d="M1.500 27V8Q2 1.500 9 1.500h17V27z" fill="#f5e2ea" stroke="#a63864" strokeWidth="1.600" /><path d="M4 25V9q0-5 5-5h14.500v21z" fill="#9b2856" />
    <path d="M17 12q0-5 6-5.500 6.500 0 6.500 5.500 0 6-6 7-2 .4-3-.5l-2 2.500-3 .5-.5 3-3 .5-1.500 3-4.500 1 .5-4 11-9z" fill="#fdf7f8" stroke="#b592a1" strokeWidth=".7" /><circle cx="24.500" cy="10.500" r="1.800" fill="#9b2856" />
  </Svg>
);

const Taskbar = () => (
  <div className="flex h-[40px] items-start overflow-hidden border-t border-[#a58a6b] bg-[linear-gradient(180deg,rgba(255,255,255,0.12)_0%,rgba(0,0,0,0)_15%,rgba(0,0,0,0.05)_60%,rgba(0,0,0,0.25)_100%),linear-gradient(93deg,#3a2414_0%,#4c3018_5%,#5c3a1e_12%,#6a4424_20%,#513015_32%,#8a5a2e_37%,#6a431f_42%,#8d5e32_50%,#6b4320_57%,#7a4d25_66%,#3e2409_73%,#754820_78%,#573513_84%,#5b3a18_90%,#2b1a08_100%)]">
    <div className="ml-[8px] w-[52px]"><StartOrb /></div>
    <TaskBtn w="w-[50px]"><Folder /></TaskBtn>
    <i className="h-[39px] w-[4px] rounded-r-[3px] border border-l-0 border-[#a89076]/60" />
    <i className="h-[39px] w-[4px] rounded-r-[3px] border border-l-0 border-[#a89076]/50" />
    <div className="ml-[19px] mt-[7px] w-[60px]"><Wmp /></div>
    <div className="mt-[2px] w-[48px]"><IE /></div>
    <div className="flex">
      <TaskBtn w="w-[59px]"><Chrome /></TaskBtn>
      <div className="ml-[3px] flex"><TaskBtn w="w-[54px]"><Thunderbird /></TaskBtn><i className="h-[39px] w-[4px] rounded-r-[3px] border border-l-0 border-[#a89076]/60" /></div>
      <div className="ml-[4px]"><TaskBtn w="w-[59px]"><Excel /></TaskBtn></div>
      <div className="ml-[3px]"><TaskBtn w="w-[59px]" bright><AccessIcon /></TaskBtn></div>
    </div>
    <div className="ml-auto flex h-full items-center text-[11.500px] text-white">
      <span className="mb-[5px] w-[31px]">ES</span>
      <Svg w={7} h={4} className="mt-px"><path d="M0 4h7L3.500 0z" fill="#fff" /></Svg>
      <Svg w={15} h={15} className="ml-[14px]"><path d="M1.500 0v15" stroke="#fff" strokeWidth="1.500" /><path d="M3 1h5l1 2h5l-1.500 3L14 8H8L7 7H3z" fill="#fff" /></Svg>
      <Svg w={16} h={15} className="ml-[9px]"><path d="M5.500 4.500h9v7h-9zM10 12v2M6 14.500h8" stroke="#fff" strokeWidth="1.400" /><path d="M1 0v3M4 0v3M0 3h5v3H3v8h3" stroke="#fff" strokeWidth="1.200" /></Svg>
      <Svg w={16} h={15} className="ml-[8px]"><path d="M0 5h3l4-4v13L3 10H0z" fill="#fff" /><path d="M9 5q1.500 2.500 0 5M11 3q3 4.500 0 9M13 1.500q4.500 6 0 12" stroke="#fff" /></Svg>
      <div className="ml-[8px] w-[76px] text-center leading-[17px] tracking-[-0.15px]"><div>09:48 a.m.</div><div>04/02/2015</div></div>
      <div className="ml-[3px] h-[38px] w-[14px] border border-[#8f7a63] bg-gradient-to-br from-[#8a7763] to-[#2e1d0b]" />
    </div>
  </div>
);

export default function App() {
  return (
    <div className="flex h-[768px] w-[1360px] flex-col overflow-hidden bg-[#88a9d6] font-['Open_Sans','Noto_Sans',sans-serif]">
      <TitleBar />
      <RibbonTabs />
      <Ribbon />
      <main className="flex h-[564px] shrink-0">
        <NavPane />
        <div className="ml-[4px] flex flex-1 flex-col border-l border-[#5f8dcc]">
          <DocTabs />
          <FormView />
        </div>
      </main>
      <StatusBar />
      <Taskbar />
    </div>
  );
}
